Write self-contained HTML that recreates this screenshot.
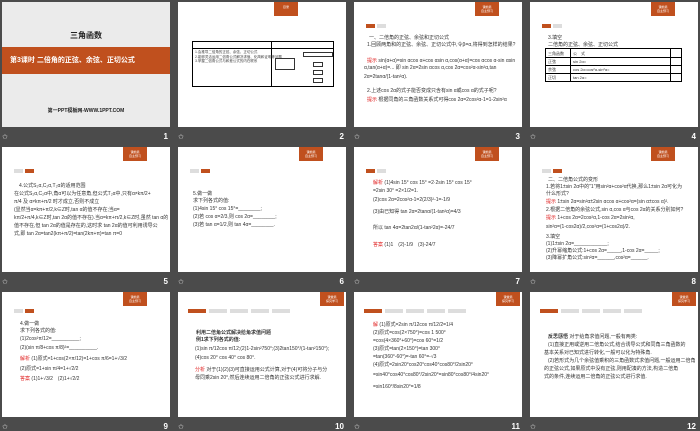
<!DOCTYPE html>
<html><head><meta charset="utf-8"><style>
*{margin:0;padding:0;box-sizing:border-box}
body{width:700px;height:431px;background:#4b4b4b;position:relative;overflow:hidden;font-family:"Liberation Sans","Noto Sans CJK SC",sans-serif}
.s{position:absolute;width:168px;height:125px;background:#fff;overflow:hidden;color:#333;font-size:5px;line-height:7px}
.n{position:absolute;color:#fff;font-size:8px;font-weight:bold;width:20px;text-align:right}
.st{position:absolute;color:#ccc;font-size:7px}
.bd{position:absolute;right:23px;top:0;width:24px;height:14px;background:#c0501e;color:#fff;font-size:3px;line-height:4px;text-align:center;padding-top:3px}
.tabs{position:absolute;left:12px;top:22px;height:5px;display:flex;gap:2px}
.tabs i{display:block;width:9px;height:4px;background:#ddd}
.tabs i.a{background:#c0501e}
.tx{position:absolute;left:15px;white-space:nowrap}
.r{color:#e02020}
.tabs2{position:absolute;left:10px;top:25px;display:flex;gap:3px}
.tabs2 i{display:block;width:18px;height:4px;background:#ddd}
.tabs2 i.a{background:#c0501e}
</style></head><body>

<!-- slide 1 -->
<div class="s" style="left:2px;top:2px;background:#ebebeb">
<div style="position:absolute;top:30px;width:100%;text-align:center;font-size:8px;font-weight:bold;color:#222">三角函数</div>
<div style="position:absolute;top:45px;width:100%;height:27px;background:#c0501e;color:#fff;font-size:7px;font-weight:bold;line-height:27px;padding-left:8px">第3课时 二倍角的正弦、余弦、正切公式</div>
<div style="position:absolute;top:106px;width:100%;text-align:center;font-size:5px;font-weight:bold;color:#222">第一PPT模板网-WWW.1PPT.COM</div>
</div>
<div class="st" style="left:2px;top:133px">✩</div><div class="n" style="left:148px;top:132px">1</div>

<!-- slide 2 -->
<div class="s" style="left:178px;top:2px">
<div class="bd" style="right:auto;left:96px;height:14px">目录</div>
<div style="position:absolute;left:14px;top:39px;width:142px;height:46px;border:1px solid #000">
<div style="position:absolute;left:0;top:0;width:79px;height:100%;border-right:1px solid #000"></div>
<div style="position:absolute;left:0;top:6px;width:100%;border-top:1px solid #000"></div>
<div style="position:absolute;left:2px;top:8px;font-size:3.5px;line-height:4.5px;color:#444">1.会推导二倍角的正弦、余弦、正切公式<br>2.能够灵活运用二倍角公式解决求值、化简和证明等问题<br>3.掌握二倍角公式与和差公式的内在联系</div>
<div style="position:absolute;left:82px;top:16px;width:20px;height:12px;border:1px solid #333"></div>
<div style="position:absolute;left:110px;top:10px;width:30px;height:5px;border:1px solid #333"></div>
<div style="position:absolute;left:120px;top:20px;width:10px;height:5px;border:1px solid #333"></div>
<div style="position:absolute;left:120px;top:28px;width:10px;height:5px;border:1px solid #333"></div>
<div style="position:absolute;left:120px;top:36px;width:10px;height:5px;border:1px solid #333"></div>
</div>
</div>
<div class="st" style="left:178px;top:133px">✩</div><div class="n" style="left:324px;top:132px">2</div>

<!-- slide 3 -->
<div class="s" style="left:354px;top:2px">
<div class="bd">课前篇<br>自主预习</div>
<div class="tabs"><i class="a"></i><i></i></div>
<div class="tx" style="top:33px">一、二倍角的正弦、余弦和正切公式</div>
<div class="tx" style="top:40px;left:13px">1.回顾两角和的正弦、余弦、正切公式中,令β=α,将得到怎样的结果?</div>
<div class="tx" style="top:56px;left:13px"><span class="r">提示</span> sin(α+α)=sin αcos α+cos αsin α,cos(α+α)=cos αcos α-sin αsin</div>
<div class="tx" style="top:63px;left:10px">α,tan(α+α)=... 即 sin 2α=2sin αcos α,cos 2α=cos²α-sin²α,tan</div>
<div class="tx" style="top:72px;left:10px">2α=2tanα/(1-tan²α).</div>
<div class="tx" style="top:86px;left:13px">2.上述cos 2α的式子能否变成只含有sin α或cos α的式子呢?</div>
<div class="tx" style="top:95px;left:13px"><span class="r">提示</span> 根据同角的三角函数关系式可得cos 2α=2cos²α-1=1-2sin²α</div>
</div>
<div class="st" style="left:354px;top:133px">✩</div><div class="n" style="left:500px;top:132px">3</div>

<!-- slide 4 -->
<div class="s" style="left:530px;top:2px">
<div class="bd">课前篇<br>自主预习</div>
<div class="tabs"><i class="a"></i><i></i></div>
<div class="tx" style="top:33px;left:18px">3.填空</div>
<div class="tx" style="top:40px;left:18px">二倍角的正弦、余弦、正切公式</div>
<div style="position:absolute;left:15px;top:46px;width:137px;height:34px;border:1px solid #000;font-size:4px">
<div style="position:absolute;left:24px;top:0;height:100%;border-left:1px solid #000"></div>
<div style="position:absolute;left:124px;top:0;height:100%;border-left:1px solid #000"></div>
<div style="position:absolute;left:0;top:8px;width:100%;border-top:1px solid #000"></div>
<div style="position:absolute;left:0;top:16px;width:100%;border-top:1px solid #000"></div>
<div style="position:absolute;left:0;top:24px;width:100%;border-top:1px solid #000"></div>
<div style="position:absolute;left:2px;top:1px;line-height:8px">三角函数<br>正弦<br>余弦<br>正切</div>
<div style="position:absolute;left:27px;top:1px;line-height:8px">公　式<br>sin 2α=<br>cos 2α=cos²α-sin²α=<br>tan 2α=</div>
</div>
</div>
<div class="st" style="left:530px;top:133px">✩</div><div class="n" style="left:676px;top:132px">4</div>

<!-- slide 5 -->
<div class="s" style="left:2px;top:147px">
<div class="bd">课前篇<br>自主预习</div>
<div class="tabs"><i></i><i class="a"></i></div>
<div class="tx" style="top:36px;left:17px">4.公式S₂α,C₂α,T₂α的适用范围</div>
<div class="tx" style="top:44px;left:12px">在公式S₂α,C₂α中,角α可以为任意角,但公式T₂α中,只有α≠kπ/2+</div>
<div class="tx" style="top:52px;left:12px">π/4 及 α≠kπ+π/2 时才成立,否则不成立</div>
<div class="tx" style="top:60px;left:12px">(显然当α=kπ+π/2,k∈Z时,tan α的值不存在;当α=</div>
<div class="tx" style="top:68px;left:12px">kπ/2+π/4,k∈Z时,tan 2α的值不存在).当α=kπ+π/2,k∈Z时,虽然 tan α的</div>
<div class="tx" style="top:76px;left:12px">值不存在,但 tan 2α的值是存在的,这时求 tan 2α的值可利用诱导公</div>
<div class="tx" style="top:84px;left:12px">式,即 tan 2α=tan2(kπ+π/2)=tan(2kπ+π)=tan π=0</div>
</div>
<div class="st" style="left:2px;top:278px">✩</div><div class="n" style="left:148px;top:277px">5</div>

<!-- slide 6 -->
<div class="s" style="left:178px;top:147px">
<div class="bd">课前篇<br>自主预习</div>
<div class="tabs"><i></i><i class="a"></i></div>
<div class="tx" style="top:44px">5.做一做</div>
<div class="tx" style="top:51px">求下列各式的值:</div>
<div class="tx" style="top:59px">(1)4sin 15° cos 15°=________;</div>
<div class="tx" style="top:67px">(2)若 cos α=2/3,则 cos 2α=________;</div>
<div class="tx" style="top:75px">(3)若 tan α=1/2,则 tan 4α=________.</div>
</div>
<div class="st" style="left:178px;top:278px">✩</div><div class="n" style="left:324px;top:277px">6</div>

<!-- slide 7 -->
<div class="s" style="left:354px;top:147px">
<div class="bd">课前篇<br>自主预习</div>
<div class="tabs"><i class="a"></i><i></i></div>
<div class="tx" style="top:33px;left:19px"><span class="r">解析</span> (1)4sin 15° cos 15° =2·2sin 15° cos 15°</div>
<div class="tx" style="top:41px;left:19px">=2sin 30° =2×1/2=1.</div>
<div class="tx" style="top:50px;left:19px">(2)cos 2α=2cos²α-1=2(2/3)²-1=-1/9</div>
<div class="tx" style="top:62px;left:19px">(3)由已知得 tan 2α=2tanα/(1-tan²α)=4/3</div>
<div class="tx" style="top:78px;left:19px">所以 tan 4α=2tan2α/(1-tan²2α)=-24/7</div>
<div class="tx" style="top:95px;left:19px"><span class="r">答案</span> (1)1　(2)-1/9　(3)-24/7</div>
</div>
<div class="st" style="left:354px;top:278px">✩</div><div class="n" style="left:500px;top:277px">7</div>

<!-- slide 8 -->
<div class="s" style="left:530px;top:147px">
<div class="bd">课前篇<br>自主预习</div>
<div class="tabs"><i></i><i class="a"></i></div>
<div class="tx" style="top:30px;left:18px">二、二倍角公式的变形</div>
<div class="tx" style="top:37px;left:16px">1.若将1±sin 2α中的"1"用sin²α+cos²α代换,那么1±sin 2α可化为</div>
<div class="tx" style="top:44px;left:16px">什么形式?</div>
<div class="tx" style="top:52px;left:16px"><span class="r">提示</span> 1±sin 2α=sin²α±2sin αcos α+cos²α=(sin α±cos α)².</div>
<div class="tx" style="top:60px;left:16px">2.根据二倍角的余弦公式,sin α,cos α与cos 2α的关系分别如何?</div>
<div class="tx" style="top:68px;left:16px"><span class="r">提示</span> 1+cos 2α=2cos²α,1-cos 2α=2sin²α,</div>
<div class="tx" style="top:77px;left:16px">sin²α=(1-cos2α)/2,cos²α=(1+cos2α)/2.</div>
<div class="tx" style="top:87px;left:16px">3.填空</div>
<div class="tx" style="top:94px;left:16px">(1)1±sin 2α=____________;</div>
<div class="tx" style="top:101px;left:16px">(2)升幂缩角公式:1+cos 2α=_____,1-cos 2α=_____;</div>
<div class="tx" style="top:108px;left:16px">(3)降幂扩角公式:sin²α=______,cos²α=______.</div>
</div>
<div class="st" style="left:530px;top:278px">✩</div><div class="n" style="left:676px;top:277px">8</div>

<!-- slide 9 -->
<div class="s" style="left:2px;top:292px">
<div class="bd">课前篇<br>自主预习</div>
<div class="tabs" style="top:17px"><i></i><i class="a"></i></div>
<div class="tx" style="top:29px;left:18px">4.做一做</div>
<div class="tx" style="top:36px;left:18px">求下列各式的值:</div>
<div class="tx" style="top:44px;left:18px">(1)2cos²π/12=__________;</div>
<div class="tx" style="top:53px;left:18px">(2)(sin π/8+cos π/8)²=__________.</div>
<div class="tx" style="top:64px;left:18px"><span class="r">解析</span> (1)原式=1+cos(2×π/12)=1+cos π/6=1+√3/2</div>
<div class="tx" style="top:74px;left:18px">(2)原式=1+sin π/4=1+√2/2</div>
<div class="tx" style="top:84px;left:18px"><span class="r">答案</span> (1)1+√3/2　(2)1+√2/2</div>
</div>
<div class="st" style="left:2px;top:423px">✩</div><div class="n" style="left:148px;top:422px">9</div>

<!-- slide 10 -->
<div class="s" style="left:178px;top:292px">
<div class="bd" style="right:2px">课堂篇<br>探究学习</div>
<div class="tabs2" style="top:17px;left:10px"><i class="a"></i><i></i><i></i><i></i><i></i></div>
<div class="tx" style="top:38px;left:18px;font-weight:bold">利用二倍角公式解决给角求值问题</div>
<div class="tx" style="top:45px;left:18px;font-weight:bold">例1求下列各式的值:</div>
<div class="tx" style="top:54px;left:17px">(1)sin π/12cos π/12;(2)1-2sin²750°;(3)2tan150°/(1-tan²150°);</div>
<div class="tx" style="top:63px;left:17px">(4)cos 20° cos 40° cos 80°.</div>
<div class="tx" style="top:75px;left:17px"><span class="r">分析</span> 对于(1)(2)(3)可直接运用公式计算,对于(4)可将分子与分</div>
<div class="tx" style="top:83px;left:17px">母同乘2sin 20°,然后连续运用二倍角的正弦公式进行求解.</div>
</div>
<div class="st" style="left:178px;top:423px">✩</div><div class="n" style="left:324px;top:422px">10</div>

<!-- slide 11 -->
<div class="s" style="left:354px;top:292px">
<div class="bd" style="right:2px">课堂篇<br>探究学习</div>
<div class="tabs2" style="top:17px;left:10px"><i class="a"></i><i></i><i></i><i></i><i></i></div>
<div class="tx" style="top:30px;left:19px"><span class="r">解</span> (1)原式=2sin π/12cos π/12/2=1/4</div>
<div class="tx" style="top:38px;left:19px">(2)原式=cos(2×750°)=cos 1 500°</div>
<div class="tx" style="top:46px;left:19px">=cos(4×360°+60°)=cos 60°=1/2</div>
<div class="tx" style="top:54px;left:19px">(3)原式=tan(2×150°)=tan 300°</div>
<div class="tx" style="top:62px;left:19px">=tan(360°-60°)=-tan 60°=-√3</div>
<div class="tx" style="top:70px;left:19px">(4)原式=2sin20°cos20°cos40°cos80°/2sin20°</div>
<div class="tx" style="top:80px;left:19px">=sin40°cos40°cos80°/2sin20°=sin80°cos80°/4sin20°</div>
<div class="tx" style="top:92px;left:19px">=sin160°/8sin20°=1/8</div>
</div>
<div class="st" style="left:354px;top:423px">✩</div><div class="n" style="left:500px;top:422px">11</div>

<!-- slide 12 -->
<div class="s" style="left:530px;top:292px">
<div class="bd" style="right:2px">课堂篇<br>探究学习</div>
<div class="tabs2" style="top:17px;left:10px"><i class="a"></i><i></i><i></i><i></i><i></i></div>
<div class="tx" style="top:42px;left:18px"><b>反思感悟</b> 对于给角求值问题,一般有两类:</div>
<div class="tx" style="top:50px;left:18px">(1)直接正用或逆用二倍角公式,结合诱导公式和同角三角函数的</div>
<div class="tx" style="top:58px;left:14px">基本关系对已知式进行转化,一般可以化为特殊角.</div>
<div class="tx" style="top:66px;left:18px">(2)若形式为几个余弦值乘积的三角函数式求值问题,一般运用二倍角</div>
<div class="tx" style="top:74px;left:14px">的正弦公式,如果原式中没有正弦,则用配凑的方法,构造二倍角</div>
<div class="tx" style="top:82px;left:14px">式的条件,连续运用二倍角的正弦公式进行求值.</div>
</div>
<div class="st" style="left:530px;top:423px">✩</div><div class="n" style="left:676px;top:422px">12</div>

</body></html>
